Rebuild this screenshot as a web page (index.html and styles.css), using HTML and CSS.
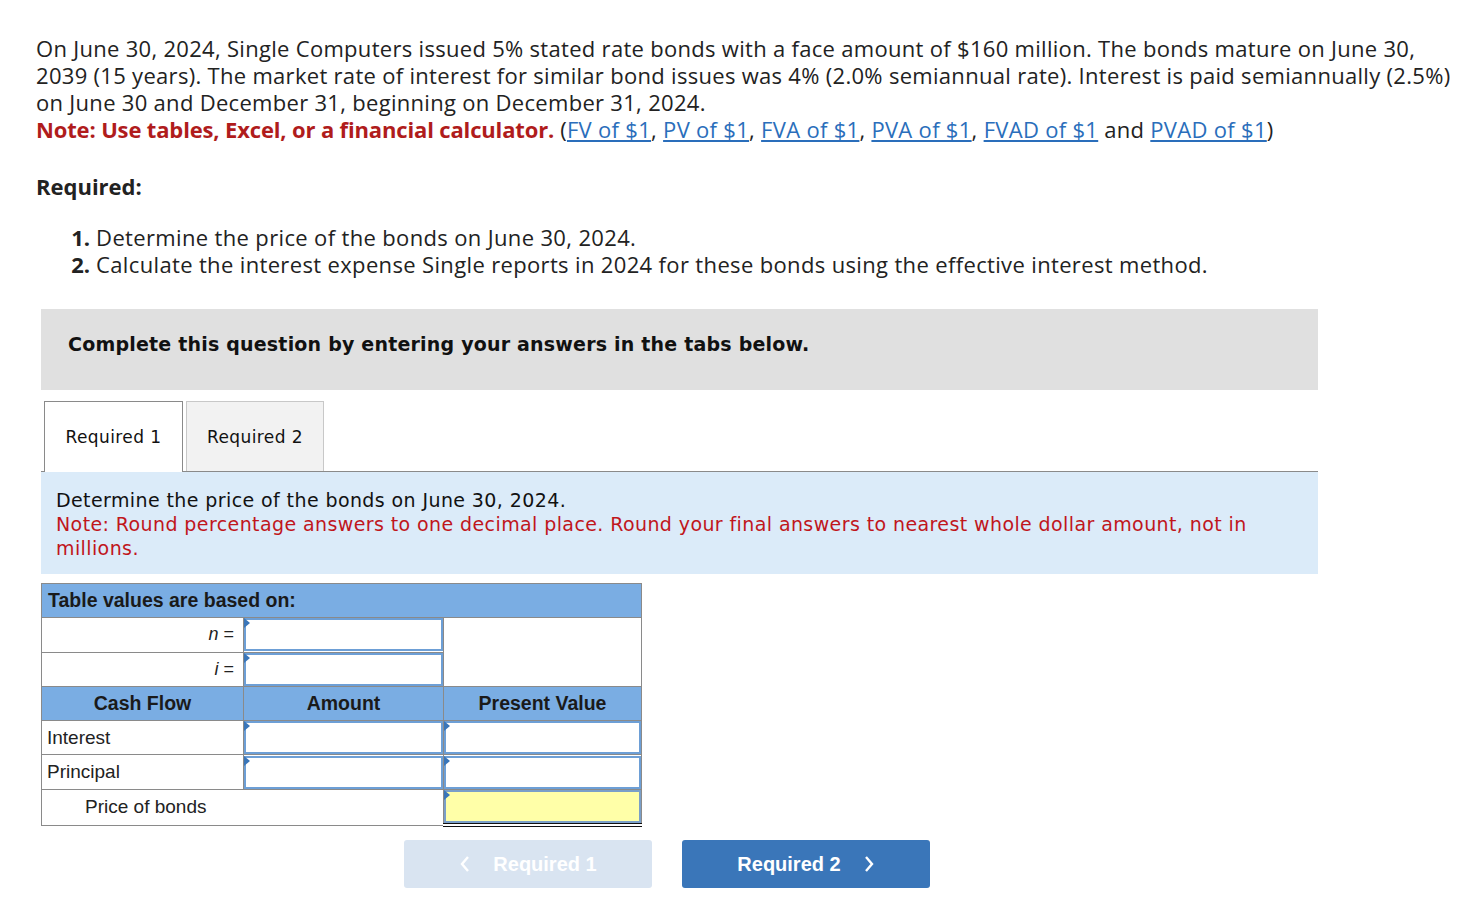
FILE: index.html
```html
<!DOCTYPE html>
<html>
<head>
  <meta charset="UTF-8">
  <title>Bond Pricing — Required 1</title>
  <link rel="stylesheet" href="styles.css">
</head>

<body>
  <div class="page">

    <p class="intro">
      On June 30, 2024, Single Computers issued 5% stated rate bonds with a face amount of $160 million. The bonds mature on June 30, 2039 (15 years). The market rate of interest for similar bond issues was 4% (2.0% semiannual rate). Interest is paid semiannually (2.5%) on June 30 and December 31, beginning on December 31, 2024.<br>
      <span class="note">Note: Use tables, Excel, or a financial calculator.</span>
      (<a href="#">FV of $1</a>, <a href="#">PV of $1</a>, <a href="#">FVA of $1</a>, <a href="#">PVA of $1</a>, <a href="#">FVAD of $1</a> and <a href="#">PVAD of $1</a>)
    </p>

    <h3 class="required">Required:</h3>

    <ol class="steps">
      <li><b>1.</b> Determine the price of the bonds on June 30, 2024.</li>
      <li><b>2.</b> Calculate the interest expense Single reports in 2024 for these bonds using the effective interest method.</li>
    </ol>

    <div class="question">
      <div class="banner">Complete this question by entering your answers in the tabs below.</div>

      <div class="tabs">
        <div class="tab active">Required 1</div>
        <div class="tab">Required 2</div>
      </div>

      <div class="instructions">
        Determine the price of the bonds on June 30, 2024.<br>
        <span class="warn">Note: Round percentage answers to one decimal place. Round your final answers to nearest whole dollar amount, not in millions.</span>
      </div>

      <table class="worksheet">
        <colgroup>
          <col class="c1">
          <col class="c2">
          <col class="c3">
        </colgroup>
        <tr>
          <th colspan="3" class="caption">Table values are based on:</th>
        </tr>
        <tr>
          <td class="label-right"><i>n</i> =</td>
          <td class="entry"><div class="field"></div></td>
          <td rowspan="2"></td>
        </tr>
        <tr>
          <td class="label-right"><i>i</i> =</td>
          <td class="entry"><div class="field"></div></td>
        </tr>
        <tr class="heads">
          <th>Cash Flow</th>
          <th>Amount</th>
          <th>Present Value</th>
        </tr>
        <tr>
          <td>Interest</td>
          <td class="entry"><div class="field"></div></td>
          <td class="entry"><div class="field"></div></td>
        </tr>
        <tr>
          <td>Principal</td>
          <td class="entry"><div class="field"></div></td>
          <td class="entry"><div class="field"></div></td>
        </tr>
        <tr>
          <td colspan="2" class="indent">Price of bonds</td>
          <td class="entry total"><div class="field yellow"></div></td>
        </tr>
      </table>

      <div class="nav">
        <button class="nav-btn disabled">
          <svg class="chev" width="12" height="18" viewBox="0 0 12 18"><path d="M9 2 L3 9 L9 16" fill="none" stroke="currentColor" stroke-width="2.4"/></svg>
          Required 1
        </button>
        <button class="nav-btn">
          Required 2
          <svg class="chev" width="12" height="18" viewBox="0 0 12 18"><path d="M3 2 L9 9 L3 16" fill="none" stroke="currentColor" stroke-width="2.4"/></svg>
        </button>
      </div>
    </div>

  </div>
</body>

</html>
```

FILE: styles.css
```css
body {
  margin: 0;
  background: #ffffff;
  color: #222222;
  font-family: 'Open Sans', 'Liberation Sans', sans-serif;
}

.page {
  padding: 35px 19px 20px 36px;
}

.intro {
  margin: 0;
  font-size: 22px;
  letter-spacing: 0.3px;
  line-height: 27px;
}

.note {
  color: #b01c1c;
  font-weight: bold;
  letter-spacing: -0.15px;
}

.intro a {
  color: #2a6ebb;
  text-decoration: underline;
}

.required {
  margin: 30px 0 0 0;
  font-size: 22px;
  line-height: 27px;
  font-weight: bold;
}

.steps {
  list-style: none;
  margin: 24px 0 0 0;
  padding: 0 0 0 32px;
  font-size: 22px;
  letter-spacing: 0.35px;
  line-height: 27px;
}

.steps b {
  display: inline-block;
  width: 22px;
  text-align: right;
  letter-spacing: 0;
}

.question {
  margin: 31px 0 0 5px;
  width: 1277px;
}

.banner {
  background: #e0e0e0;
  height: 81px;
  box-sizing: border-box;
  padding: 24px 27px 0 27px;
  font-family: 'DejaVu Sans', Verdana, sans-serif;
  font-weight: bold;
  font-size: 19px;
  letter-spacing: 0.2px;
  color: #111111;
}

.tabs {
  display: flex;
  gap: 3px;
  margin-top: 11px;
  padding-left: 3px;
  border-bottom: 1px solid #8a8a8a;
  height: 70px;
}

.tab {
  width: 138px;
  height: 70px;
  box-sizing: border-box;
  border: 1px solid #c8c8c8;
  border-bottom: none;
  background: #f2f2f2;
  display: flex;
  align-items: center;
  justify-content: center;
  font-family: 'DejaVu Sans', Verdana, sans-serif;
  font-size: 17px;
  letter-spacing: 0.4px;
  color: #111111;
}

.tab.active {
  width: 139px;
  height: 71px;
  background: #ffffff;
  border-color: #8a8a8a;
  position: relative;
  z-index: 1;
}

.instructions {
  background: #dbebf9;
  padding: 16px 15px 14px 15px;
  font-family: 'DejaVu Sans', Verdana, sans-serif;
  font-size: 19px;
  letter-spacing: 0.4px;
  line-height: 24px;
  color: #111111;
}

.warn {
  color: #c0161c;
}

.worksheet {
  margin-top: 9px;
  border-collapse: collapse;
  table-layout: fixed;
  width: 600px;
  font-family: 'Liberation Sans', Arial, sans-serif;
  font-size: 19px;
  color: #222222;
}

.c1 {
  width: 202px;
}

.c2 {
  width: 200px;
}

.c3 {
  width: 198px;
}

.worksheet td, .worksheet th {
  border: 1px solid #8a8a8a;
  height: 33.3px;
  padding: 0;
}

.worksheet td:first-child {
  padding-left: 5px;
}

.worksheet td.label-right {
  text-align: right;
  padding-right: 9px;
  font-size: 18px;
}

.worksheet td.indent {
  padding-left: 43px;
}

.caption {
  background: #7aade3;
  text-align: left;
  padding-left: 6px !important;
  font-weight: bold;
  font-size: 19.5px;
  color: #1a1a1a;
}

.heads th {
  background: #7aade3;
  text-align: center;
  font-size: 19.5px;
  color: #1a1a1a;
}

.field {
  position: relative;
  box-sizing: border-box;
  height: 33px;
  border: 2px solid #6d9fd6;
  background: #ffffff;
}

.field::before {
  content: '';
  position: absolute;
  top: -2px;
  left: -2px;
  border-left: 6px solid #3a76b9;
  border-top: 5px solid transparent;
  border-bottom: 5px solid transparent;
}

.field.yellow {
  background: #ffffa8;
  border-color: #7a9fc8;
}

.worksheet td.total {
  border-bottom: 4px double #111111;
}

.nav {
  display: flex;
  justify-content: center;
  gap: 30px;
  margin-top: 13px;
  padding-right: 25px;
}

.nav-btn {
  width: 248px;
  height: 48px;
  border: none;
  border-radius: 3px;
  background: #3a76b9;
  color: #ffffff;
  font-family: 'Liberation Sans', Arial, sans-serif;
  font-weight: bold;
  font-size: 20px;
  display: flex;
  align-items: center;
  justify-content: center;
  gap: 22px;
}

.nav-btn.disabled {
  background: #d9e4f1;
}
```
